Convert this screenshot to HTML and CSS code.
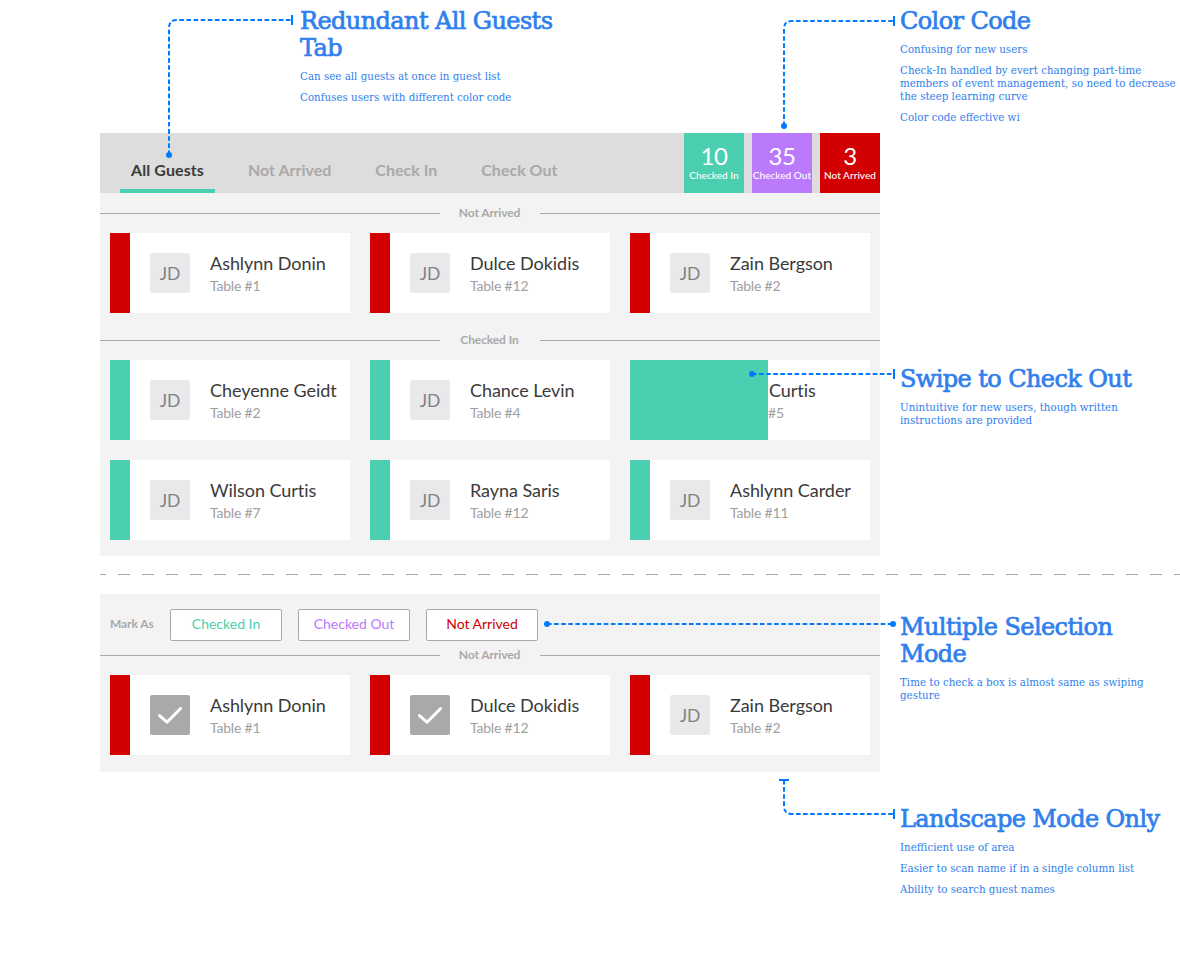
FILE: index.html
```html
<!DOCTYPE html>
<html lang="en">
<head>
<meta charset="utf-8">
<title>Guest list review</title>
<link rel="stylesheet" href="styles.css">
</head>
<body>
<div class="page">
  <section class="row row-main">
    <div class="main">
      <div class="top-note">
        <article class="note">
          <h2>Redundant All Guests<br>Tab</h2>
          <p>Can see all guests at once in guest list</p>
          <p>Confuses users with different color code</p>
        </article>
      </div>
      <div class="board board-all">
        <header class="bar">
          <nav class="tabs">
            <span class="tab active">All Guests</span>
            <span class="tab">Not Arrived</span>
            <span class="tab">Check In</span>
            <span class="tab">Check Out</span>
          </nav>
          <div class="stats">
            <div class="stat in"><strong>10</strong><span>Checked In</span></div>
            <div class="stat out"><strong>35</strong><span>Checked Out</span></div>
            <div class="stat missing"><strong>3</strong><span>Not Arrived</span></div>
          </div>
        </header>
        <h3 class="divider">Not Arrived</h3>
        <div class="cards">
          <div class="card missing"><i class="avatar">JD</i><div class="who"><b>Ashlynn Donin</b><span>Table #1</span></div></div>
          <div class="card missing"><i class="avatar">JD</i><div class="who"><b>Dulce Dokidis</b><span>Table #12</span></div></div>
          <div class="card missing"><i class="avatar">JD</i><div class="who"><b>Zain Bergson</b><span>Table #2</span></div></div>
        </div>
        <h3 class="divider second">Checked In</h3>
        <div class="cards">
          <div class="card in"><i class="avatar">JD</i><div class="who"><b>Cheyenne Geidt</b><span>Table #2</span></div></div>
          <div class="card in"><i class="avatar">JD</i><div class="who"><b>Chance Levin</b><span>Table #4</span></div></div>
          <div class="card in swiped"><div class="who"><b>Curtis</b><span>#5</span></div></div>
          <div class="card in"><i class="avatar">JD</i><div class="who"><b>Wilson Curtis</b><span>Table #7</span></div></div>
          <div class="card in"><i class="avatar">JD</i><div class="who"><b>Rayna Saris</b><span>Table #12</span></div></div>
          <div class="card in"><i class="avatar">JD</i><div class="who"><b>Ashlynn Carder</b><span>Table #11</span></div></div>
        </div>
      </div>
    </div>
    <aside class="notes">
      <article class="note">
        <h2>Color Code</h2>
        <p>Confusing for new users</p>
        <p>Check-In handled by evert changing part-time<br>members of event management, so need to decrease<br>the steep learning curve</p>
        <p>Color code effective wi</p>
      </article>
      <article class="note note-swipe">
        <h2>Swipe to Check Out</h2>
        <p>Unintuitive for new users, though written<br>instructions are provided</p>
      </article>
    </aside>
  </section>

  <div class="rule"></div>

  <section class="row">
    <div class="main">
      <div class="board board-select">
        <div class="actions">
          <span class="mark">Mark As</span>
          <button class="btn text-in">Checked In</button>
          <button class="btn text-out">Checked Out</button>
          <button class="btn text-missing">Not Arrived</button>
        </div>
        <h3 class="divider tight">Not Arrived</h3>
        <div class="cards">
          <div class="card missing">
            <i class="avatar checked"><svg width="40" height="40" viewBox="0 0 40 40"><path d="M9.5 20.6 L17 27.2 L30.6 13.5"/></svg></i>
            <div class="who"><b>Ashlynn Donin</b><span>Table #1</span></div>
          </div>
          <div class="card missing">
            <i class="avatar checked"><svg width="40" height="40" viewBox="0 0 40 40"><path d="M9.5 20.6 L17 27.2 L30.6 13.5"/></svg></i>
            <div class="who"><b>Dulce Dokidis</b><span>Table #12</span></div>
          </div>
          <div class="card missing"><i class="avatar">JD</i><div class="who"><b>Zain Bergson</b><span>Table #2</span></div></div>
        </div>
      </div>
    </div>
    <aside class="notes">
      <article class="note note-multi">
        <h2>Multiple Selection<br>Mode</h2>
        <p>Time to check a box is almost same as swiping<br>gesture</p>
      </article>
      <article class="note note-landscape">
        <h2>Landscape Mode Only</h2>
        <p>Inefficient use of area</p>
        <p>Easier to scan name if in a single column list</p>
        <p>Ability to search guest names</p>
      </article>
    </aside>
  </section>

  <!-- Connectors between the notes and the boards -->
  <svg class="links" width="1180" height="953" viewBox="0 0 1180 953">
    <g class="dash">
      <path d="M169 155 V28 Q169 20 177 20 H292"/>
      <path d="M784 126 V29 Q784 21 792 21 H894"/>
      <path d="M752 374 H894"/>
      <path d="M547 624 H893"/>
      <path d="M784 780 V806 Q784 814 792 814 H894"/>
    </g>
    <g class="cap">
      <path d="M292 15 V25"/>
      <path d="M894 16 V26"/>
      <path d="M894 369 V379"/>
      <path d="M894 809 V819"/>
      <path d="M779 780 H789"/>
    </g>
    <g class="dot">
      <circle cx="169" cy="155" r="3"/>
      <circle cx="784" cy="126" r="3"/>
      <circle cx="752" cy="374" r="3"/>
      <circle cx="547" cy="624" r="3"/>
      <circle cx="893" cy="624" r="3"/>
    </g>
  </svg>
</div>
</body>
</html>
```
FILE: styles.css
```css
* { box-sizing: border-box; }
body { margin: 0; background: #fff; font-family: Lato, "Liberation Sans", sans-serif; }
h2, h3, p { margin: 0; }
i, b, strong { font-style: normal; font-weight: 400; }

.page { position: relative; height: 953px; overflow: hidden; padding-left: 100px; }
.row { display: grid; grid-template-columns: 780px 280px; column-gap: 20px; }
.row-main { height: 556px; }

/* Notes */
.note { color: #2f80ed; font-family: "DejaVu Serif", serif; white-space: nowrap; }
.note h2 { padding-top: 1px; font-size: 24px; line-height: 27px; font-weight: 400; letter-spacing: -0.6px; -webkit-text-stroke: 0.7px #2f80ed; }
.note p { margin-top: 8px; font-size: 10.3px; line-height: 13px; }
.top-note { height: 133px; padding: 7px 0 0 200px; }
.notes { padding-top: 7px; }
.note-swipe { margin-top: 241px; }
.note-multi { margin-top: 12px; }
.note-landscape { margin-top: 103px; }

/* Boards */
.board { background: #f3f3f3; }
.board-all { height: 423px; }
.board-select { height: 178px; }
.bar { display: flex; justify-content: space-between; height: 60px; background: #ddd; }
.tabs { display: flex; align-items: flex-end; padding-left: 20px; }
.tab { height: 40px; padding-top: 7px; margin-right: 33px; color: #a9a9a9; font-size: 16px; line-height: 20px; font-weight: 700; text-align: center; white-space: nowrap; }
.tab + .tab { margin-right: 44px; }
.tab.active { width: 95px; color: #3a3a3a; border-bottom: 4px solid #4ccfb0; letter-spacing: 0.1px; }

.stats { display: flex; gap: 8px; }
.stat { width: 60px; padding-top: 10px; color: #fff; text-align: center; white-space: nowrap; }
.stat strong { display: block; font-size: 24px; line-height: 26px; letter-spacing: -0.5px; }
.stat span { display: block; font-size: 10px; line-height: 12px; font-weight: 500; letter-spacing: 0.05px; }
.stat.in { background: #4ccfb0; }
.stat.out { background: #bb79fc; }
.stat.missing { background: #d20000; }

.divider { display: grid; grid-template-columns: 340px 1fr 340px; align-items: center; height: 40px; color: #a9a9a9; font-size: 12px; line-height: 16px; font-weight: 700; letter-spacing: -0.1px; text-align: center; text-indent: -1px; }
.divider::before, .divider::after { content: ""; height: 1px; background: #a9a9a9; }
.divider.second { margin-top: 7px; }
.divider.tight { height: 20px; margin-bottom: 10px; }

.cards { display: grid; grid-template-columns: repeat(3, 240px); gap: 20px; padding: 0 10px; }
.card { display: flex; align-items: center; height: 80px; padding-left: 20px; background: #fff; border-left: 20px solid; white-space: nowrap; }
.card.missing { border-color: #d20000; }
.card.in { border-color: #4ccfb0; }
.card.swiped { border-left-width: 138px; padding-left: 0; }
.card.swiped .who { margin-left: 0; }
.card.swiped b { padding-left: 1px; }
.avatar { display: flex; align-items: center; justify-content: center; width: 40px; height: 40px; border-radius: 2px; background: #e9e9eb; color: #828282; font-size: 17.5px; }
.avatar.checked { background: #a9a9a9; }
.avatar path { fill: none; stroke: #fff; stroke-width: 3; stroke-linecap: round; stroke-linejoin: round; }
.who { margin-left: 20px; padding-top: 2px; }
.who b { display: block; color: #3a3a3a; font-size: 18px; line-height: 24px; letter-spacing: -0.05px; }
.who span { display: block; color: #a0a0a0; font-size: 14px; line-height: 22px; letter-spacing: -0.2px; }

/* Selection mode */
.actions { display: flex; align-items: center; gap: 16px; height: 51px; padding: 10px 0 0 10px; }
.mark { width: 44px; padding-bottom: 2px; color: #a9a9a9; font-size: 12px; font-weight: 700; letter-spacing: -0.1px; white-space: nowrap; }
.btn { width: 112px; height: 32px; padding: 0 0 2px; border: 1px solid #a9a9a9; border-radius: 2px; background: #fff; font: 400 14px Lato, sans-serif; }
.text-in { color: #4ccfb0; }
.text-out { color: #bb79fc; }
.text-missing { color: #d20000; }

.rule { height: 38px; background: repeating-linear-gradient(90deg, #a9a9a9 0 12px, transparent 12px 24px) -6px 18px / 1104px 1px no-repeat; }

.links { position: absolute; left: 0; top: 0; pointer-events: none; }
.dash, .cap { fill: none; stroke: #007bff; stroke-width: 2; }
.dash { stroke-dasharray: 4.6 2.5; }
.dot { fill: #007bff; }
```
